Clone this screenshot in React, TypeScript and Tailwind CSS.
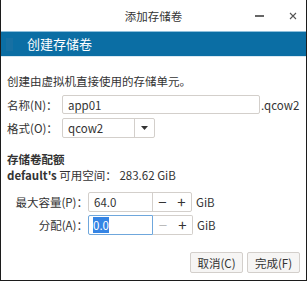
import React from "react";

export default function App() {
  return (
    <div className="w-[307px] h-[281px] bg-white border-x border-b border-[#1c1c1c] flex flex-col font-['Noto_Sans_CJK_SC','Noto_Sans',sans-serif] text-[11.5px] leading-[16px] text-[#333333]">
      {/* title bar */}
      <div className="h-[31px] grid grid-cols-[1fr_auto_1fr] items-center shrink-0">
        <div />
        <div className="text-[11.5px] text-[#333333] pt-[1px]">添加存储卷</div>
        <div className="flex items-center justify-end pr-[9px] gap-[25px]">
          <div className="w-[9px] h-[1.5px] bg-[#666] mt-[1px]" />
          <svg width="8" height="8" viewBox="0 0 8 8" className="mt-[1px]">
            <path d="M1 1L7 7M7 1L1 7" stroke="#555" strokeWidth="1.1" />
          </svg>
        </div>
      </div>
      {/* header band */}
      <div className="h-[26px] bg-[#0b6ea4] border-t border-[#8fc0dc] border-b border-b-[#d9e9f2] flex items-center shrink-0">
        <div className="ml-[5px] w-[7px] h-[13px] bg-[#1770a3]" />
        <div className="ml-[14px] text-[13px] text-white leading-[16px]">创建存储卷</div>
      </div>
      {/* body */}
      <div className="flex-1 flex flex-col pl-[6px] pr-[6px] pb-[7px]">
        <div className="mt-[16px]">创建由虚拟机直接使用的存储单元。</div>
        <div className="mt-[6px] flex items-center h-[19px]">
          <div className="w-[55px]">名称(N)：</div>
          <div className="w-[198px] h-[19px] border border-[#d3cfcb] rounded-[2px] pl-[5px] flex items-center">app01</div>
          <div className="ml-[1px]">.qcow2</div>
        </div>
        <div className="mt-[4px] flex items-center h-[20px]">
          <div className="w-[55px]">格式(O)：</div>
          <div className="w-[93px] h-[20px] border border-[#d3cfcb] rounded-[2px] flex">
            <div className="flex-1 pl-[5px] flex items-center">qcow2</div>
            <div className="w-[20px] border-l border-[#d3cfcb] flex items-center justify-center">
              <svg width="7" height="4" viewBox="0 0 7 4">
                <path d="M0 0H7L3.5 4Z" fill="#333" />
              </svg>
            </div>
          </div>
        </div>
        <div className="mt-[13px] font-bold">存储卷配额</div>
        <div>
          <span className="font-bold">default's</span> 可用空间： 283.62 GiB
        </div>
        <div className="mt-[9px] flex items-center h-[20px]">
          <div className="w-[81px] text-right">最大容量(P)：</div>
          <div className="h-[20px] flex border border-[#d3cfcb] rounded-[2px]">
            <div className="w-[63px] pl-[5px] flex items-center">64.0</div>
            <div className="w-[20px] border-l border-[#d3cfcb] flex items-center justify-center text-[15px] text-[#333]">−</div>
            <div className="w-[19px] flex items-center justify-center text-[15px] text-[#333]">+</div>
          </div>
          <div className="ml-[4px]">GiB</div>
        </div>
        <div className="mt-[3px] flex items-center h-[20px]">
          <div className="w-[81px] text-right">分配(A)：</div>
          <div className="h-[20px] flex">
            <div className="w-[65px] border border-[#6fa7dc] rounded-l-[2px] pl-[4px] flex items-center">
              <span className="bg-[#3584e4] text-white leading-[16px]">0.0</span>
            </div>
            <div className="flex border-y border-r border-[#d3cfcb] rounded-r-[2px]">
              <div className="w-[20px] flex items-center justify-center text-[15px] text-[#bbbbbb]">−</div>
              <div className="w-[19px] flex items-center justify-center text-[15px] text-[#333]">+</div>
            </div>
          </div>
          <div className="ml-[4px]">GiB</div>
        </div>
        <div className="mt-auto flex justify-end gap-[4px]">
          <div className="w-[53px] h-[21px] border border-[#d3cfcb] rounded-[2px] bg-[#f6f5f4] flex items-center justify-center">取消(C)</div>
          <div className="w-[53px] h-[21px] border border-[#d3cfcb] rounded-[2px] bg-[#f6f5f4] flex items-center justify-center">完成(F)</div>
        </div>
      </div>
    </div>
  );
}
